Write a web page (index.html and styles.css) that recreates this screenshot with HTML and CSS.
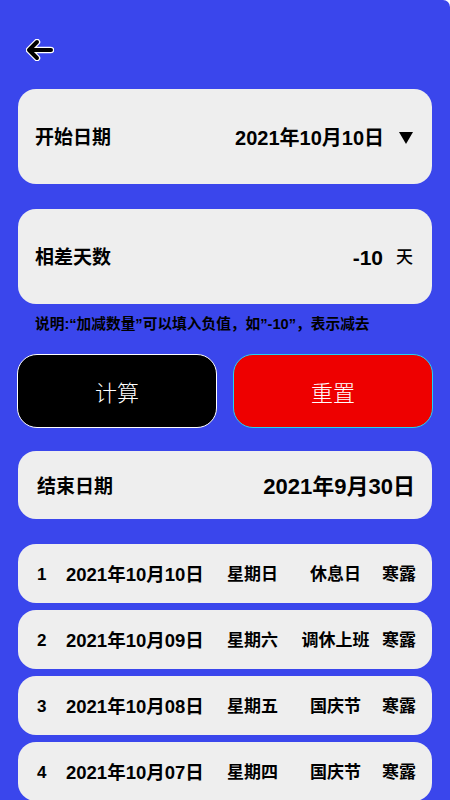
FILE: index.html
```html
<!DOCTYPE html>
<html lang="zh-CN">
<head>
    <meta charset="UTF-8">
    <meta name="viewport" content="width=device-width, initial-scale=1.0">
    <title>日期计算</title>
    <link rel="stylesheet" href="styles.css">
</head>
<body>
    <div class="app">
        <div class="top-bar">
            <svg class="back-icon" width="28" height="22" viewBox="0 0 28 22">
                <path d="M25 11 H4 M11 3 L3 11 L11 19" fill="none" stroke="#fff" stroke-width="6.5" stroke-linecap="round" stroke-linejoin="round"/>
                <path d="M25 11 H4 M11 3 L3 11 L11 19" fill="none" stroke="#000" stroke-width="4" stroke-linecap="round" stroke-linejoin="round"/>
            </svg>
        </div>

        <div class="field-card">
            <span class="field-label">开始日期</span>
            <div class="field-value">
                <span class="date-text">2021年10月10日</span>
                <span class="dropdown-arrow"></span>
            </div>
        </div>

        <div class="field-card gap-top">
            <span class="field-label">相差天数</span>
            <div class="field-value">
                <span class="days-num">-10</span>
                <span class="days-unit">天</span>
            </div>
        </div>

        <p class="hint">说明:“加减数量”可以填入负值，如”-10”，表示减去</p>

        <div class="button-row">
            <button class="action-button calc">计算</button>
            <button class="action-button reset">重置</button>
        </div>

        <div class="result-card">
            <span class="field-label">结束日期</span>
            <span class="result-date">2021年9月30日</span>
        </div>

        <div class="day-list" id="day-list">
            <!-- rows inserted below -->
        </div>
    </div>

    <script>
        const days = [
            { date: '2021年10月10日', week: '星期日', type: '休息日', term: '寒露' },
            { date: '2021年10月09日', week: '星期六', type: '调休上班', term: '寒露' },
            { date: '2021年10月08日', week: '星期五', type: '国庆节', term: '寒露' },
            { date: '2021年10月07日', week: '星期四', type: '国庆节', term: '寒露' }
        ];

        document.getElementById('day-list').innerHTML = days
            .map((day, index) => `
                <div class="day-row">
                    <span class="day-index">${index + 1}</span>
                    <span class="day-date">${day.date}</span>
                    <span class="day-week">${day.week}</span>
                    <span class="day-type">${day.type}</span>
                    <span class="day-term">${day.term}</span>
                </div>
            `)
            .join('');
    </script>
</body>
</html>
```

FILE: styles.css
```css
body {
    margin: 0;
    background: #ffffff;
    font-family: "Liberation Sans", "Noto Sans CJK SC", sans-serif;
    color: #000;
}

.app {
    background: #3a46ec;
    min-height: 800px;
    padding: 0 18px;
    border-top-right-radius: 7px;
    box-sizing: border-box;
    overflow: hidden;
}

.top-bar {
    padding-top: 39px;
    height: 22px;
    margin-bottom: 28px;
}

.back-icon {
    display: block;
    margin-left: 8px;
}

.field-card {
    height: 95px;
    box-sizing: border-box;
    background: #eeeeee;
    border-radius: 18px;
    display: flex;
    align-items: center;
    justify-content: space-between;
    padding: 2px 19px 0 17px;
    line-height: 26px;
}

.gap-top {
    margin-top: 25px;
}

.field-label {
    font-size: 19px;
    font-weight: bold;
}

.field-value {
    display: flex;
    align-items: center;
}

.date-text {
    font-size: 20px;
    font-weight: bold;
}

.dropdown-arrow {
    width: 0;
    height: 0;
    margin-left: 15px;
    border-left: 7px solid transparent;
    border-right: 7px solid transparent;
    border-top: 12px solid #000;
}

.days-num {
    font-size: 21px;
    font-weight: bold;
}

.days-unit {
    font-size: 17px;
    font-weight: 500;
    margin-left: 13px;
}

.hint {
    margin: 12px 0 0 17px;
    font-size: 14.7px;
    line-height: 17px;
    font-weight: bold;
}

.button-row {
    display: flex;
    gap: 16px;
    margin: 21px -1px 0;
}

.action-button {
    flex: 1;
    height: 74px;
    border-radius: 20px;
    color: #fff;
    font-family: "Noto Sans CJK SC", sans-serif;
    font-size: 22px;
    font-weight: 300;
    cursor: pointer;
}

.calc {
    background: #000;
    border: 1px solid #ffffff;
}

.reset {
    background: #ee0000;
    border: 1px solid #22d3f0;
}

.result-card {
    margin-top: 23px;
    height: 68px;
    box-sizing: border-box;
    background: #eeeeee;
    border-radius: 18px;
    display: flex;
    align-items: center;
    justify-content: space-between;
    padding: 3px 17px 0 19px;
    line-height: 26px;
}

.result-date {
    font-size: 22px;
    font-weight: bold;
}

.day-list {
    margin-top: 25px;
    display: flex;
    flex-direction: column;
    gap: 7px;
}

.day-row {
    height: 59px;
    box-sizing: border-box;
    background: #eeeeee;
    border-radius: 18px;
    display: grid;
    grid-template-columns: 29px 161px 73px 71px 1fr;
    align-items: center;
    padding: 3px 0 0 19px;
    font-size: 17px;
    line-height: 24px;
    font-weight: bold;
    white-space: nowrap;
}

.day-date {
    font-size: 18.5px;
}

.day-type {
    text-align: center;
}

.day-term {
    padding-left: 11px;
}
```
